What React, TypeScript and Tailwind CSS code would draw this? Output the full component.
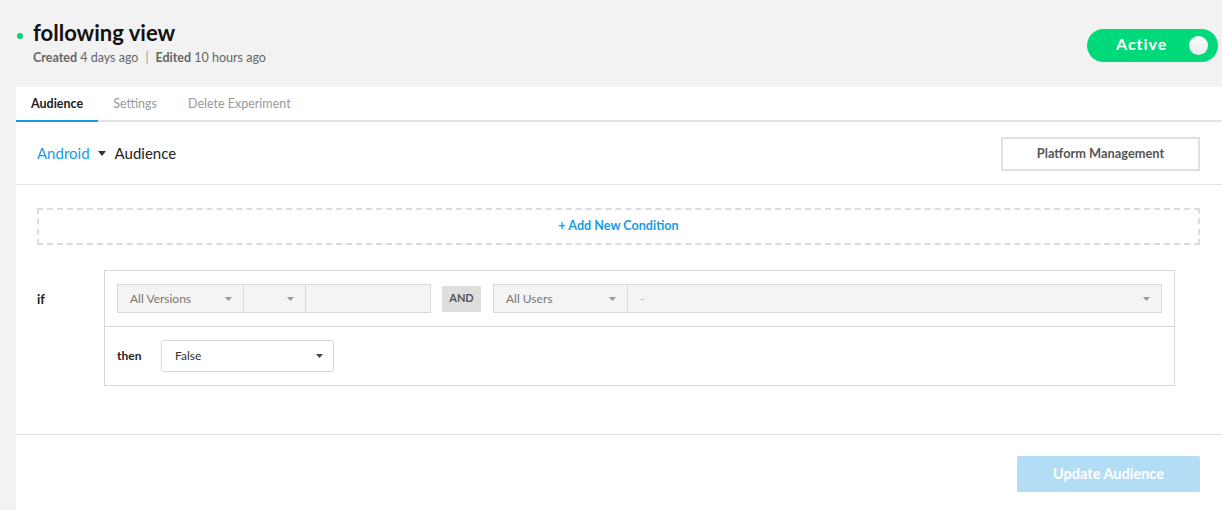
import React from "react";

const Caret = ({ className = "", w = 8, h = 5 }: { className?: string; w?: number; h?: number }) => (
    <svg width={w} height={h} viewBox={`0 0 ${w} ${h}`} className={className}>
        <path d={`M0 0 L${w} 0 L${w / 2} ${h} Z`} fill="currentColor" />
    </svg>
);

const GraySelect = ({ label, width, caretPad }: { label: string; width: string; caretPad?: string }) => (
    <div className={`${width} h-[29px] flex items-center justify-between bg-[#f4f4f4] border border-[#d9d9d9] pl-3 ${caretPad ?? "pr-[11px]"} text-[12px] text-[#777]`}>
        <span>{label}</span>
        <Caret className="text-[#999]" w={7} h={4} />
    </div>
);

export default function App() {
    return (
        <div className="min-h-[510px] bg-[#f2f2f2] pl-4 font-['Lato','Open_Sans',sans-serif] text-[#222]">
            {/* header */}
            <div className="h-[87px] flex justify-between items-start pr-1">
                <div className="pt-[19px]">
                    <div className="flex items-center">
                        <span className="w-[6px] h-[6px] rounded-full bg-[#00d47a] ml-[1px] mt-[6px] mr-[10px]" />
                        <h1 className="text-[22px] leading-7 font-bold text-[#111]">following view</h1>
                    </div>
                    <p className="ml-[17px] text-[12.5px] leading-[22px] text-[#666]">
                        <span className="font-bold">Created</span> 4 days ago
                        <span className="mx-[7px] text-[#999]">|</span>
                        <span className="font-bold">Edited</span> 10 hours ago
                    </p>
                </div>
                <div className="mt-[29px] w-[131px] h-[33px] rounded-full bg-[#00d97a] flex items-center pl-[29px] pr-[10px] justify-between">
                    <span className="text-white font-bold text-[16px] leading-none tracking-[1px] pb-[3px]">Active</span>
                    <span className="w-[19px] h-[19px] rounded-full bg-gradient-to-b from-white to-[#e9e9e9]" />
                </div>
            </div>

            {/* panel */}
            <div className="bg-white min-h-[423px]">
                <div className="flex h-[35px] border-b-2 border-[#e4e4e4] text-[12.5px]">
                    <div className="px-[15px] pt-[2px] flex items-center font-bold text-[#222] border-b-2 border-[#1a9be0] -mb-[2px]">Audience</div>
                    <div className="pl-[15px] pr-[16px] pt-[2px] flex items-center text-[#9a9a9a]">Settings</div>
                    <div className="px-[15px] pt-[2px] flex items-center text-[#9a9a9a]">Delete Experiment</div>
                </div>

                <div className="h-[63px] border-b border-[#e2e2e2] flex items-center justify-between pl-[21px] pr-[22px]">
                    <div className="flex items-center text-[15px]">
                        <span className="text-[#1a9be0]">Android</span>
                        <Caret className="text-[#333] ml-[8px] mr-[9px]" />
                        <span className="text-[#222]">Audience</span>
                    </div>
                    <button className="w-[199px] h-[34px] mt-[1px] border-2 border-[#e0e0e0] text-[12.8px] font-bold text-[#555]">
                        Platform Management
                    </button>
                </div>

                <div className="pl-[21px] pr-[22px] pt-[23px]">
                    <div className="h-[37px] border-2 border-dashed border-[#dcdcdc] flex items-center justify-center text-[12.6px] font-bold text-[#1a9be0]">
                        + Add New Condition
                    </div>

                    <div className="mt-[25px] flex items-start pb-[48px]">
                        <div className="w-[67px] pt-[20px] text-[13px] font-bold text-[#222]">if</div>
                        <div className="flex-1 mr-[25px] border border-[#d6d6d6]">
                            <div className="flex items-center px-3 py-[13px] border-b border-[#d6d6d6]">
                                <GraySelect label="All Versions" width="w-[127px]" caretPad="pr-[11px]" />
                                <GraySelect label="" width="w-[63px] -ml-px" caretPad="pr-[11px]" />
                                <div className="w-[126px] -ml-px h-[29px] bg-[#f4f4f4] border border-[#d9d9d9]" />
                                <div className="ml-[11px] w-[39px] h-[26px] bg-[#dedede] flex items-center justify-center text-[11px] font-bold text-[#555]">AND</div>
                                <GraySelect label="All Users" width="ml-3 w-[135px]" caretPad="pr-[11px]" />
                                <div className="flex-1 -ml-px h-[29px] bg-[#f4f4f4] border border-[#d9d9d9] flex items-center justify-between pl-3 pr-[11px] text-[12px] text-[#bbb]">
                                    <span>-</span>
                                    <Caret className="text-[#999]" w={7} h={4} />
                                </div>
                            </div>
                            <div className="h-[58px] flex items-center px-3">
                                <span className="w-[44px] text-[12px] font-bold text-[#222]">then</span>
                                <div className="w-[173px] h-[32px] bg-white border border-[#d9d9d9] rounded-[3px] flex items-center justify-between pl-[13px] pr-[10px] text-[12px] text-[#333]">
                                    <span>False</span>
                                    <Caret className="text-[#444]" w={7} h={4} />
                                </div>
                            </div>
                        </div>
                    </div>
                </div>

                <div className="border-t border-[#e2e2e2] flex justify-end pr-[22px] pt-[21px] pb-[19px]">
                    <button className="w-[183px] h-[36px] rounded-[2px] bg-[#b3dcf5] text-white font-bold text-[14.5px]">
                        Update Audience
                    </button>
                </div>
            </div>
        </div>
    );
}
